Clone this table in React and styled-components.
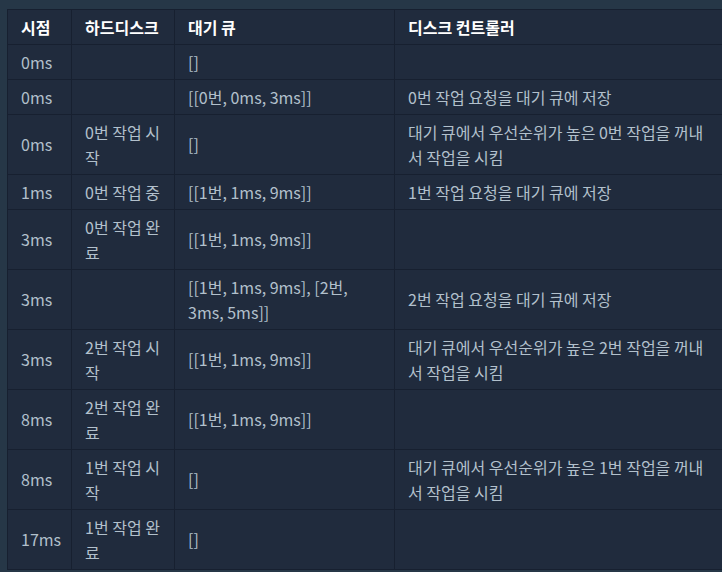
import React from "react";
import styled, { createGlobalStyle } from "styled-components";

const GlobalStyle = createGlobalStyle`
  html, body {
    margin: 0;
    padding: 0;
    background: #263747;
    overflow: hidden;
  }
`;

const Page = styled.div`
  padding: 9px 0 0 7px;
  font-family: "Noto Sans CJK KR", "Noto Sans", sans-serif;
`;

const Table = styled.table`
  border-collapse: collapse;
  table-layout: fixed;
  width: 717px;
  background: #202b3d;
  border: 1px solid #172030;
`;

const Col = styled.col`
  width: ${(p) => p.$w}px;
`;

const Th = styled.th`
  text-align: left;
  font-weight: 700;
  font-size: 16px;
  line-height: 25px;
  color: #ffffff;
  padding: 4.5px 13px;
  border: 1px solid #172030;
`;

const Td = styled.td`
  font-size: 16px;
  line-height: 25px;
  color: #b2c0cc;
  padding: 4.5px 13px;
  border: 1px solid #172030;
  vertical-align: middle;
`;

const columns = [
  { title: "시점", width: 64 },
  { title: "하드디스크", width: 103 },
  { title: "대기 큐", width: 220 },
  { title: "디스크 컨트롤러", width: 330 },
];

const rows = [
  ["0ms", "", "[]", ""],
  ["0ms", "", "[[0번, 0ms, 3ms]]", "0번 작업 요청을 대기 큐에 저장"],
  ["0ms", "0번 작업 시작", "[]", "대기 큐에서 우선순위가 높은 0번 작업을 꺼내서 작업을 시킴"],
  ["1ms", "0번 작업 중", "[[1번, 1ms, 9ms]]", "1번 작업 요청을 대기 큐에 저장"],
  ["3ms", "0번 작업 완료", "[[1번, 1ms, 9ms]]", ""],
  ["3ms", "", "[[1번, 1ms, 9ms], [2번, 3ms, 5ms]]", "2번 작업 요청을 대기 큐에 저장"],
  ["3ms", "2번 작업 시작", "[[1번, 1ms, 9ms]]", "대기 큐에서 우선순위가 높은 2번 작업을 꺼내서 작업을 시킴"],
  ["8ms", "2번 작업 완료", "[[1번, 1ms, 9ms]]", ""],
  ["8ms", "1번 작업 시작", "[]", "대기 큐에서 우선순위가 높은 1번 작업을 꺼내서 작업을 시킴"],
  ["17ms", "1번 작업 완료", "[]", ""],
];

function App() {
  return (
    <Page>
      <GlobalStyle />
      <Table>
        <colgroup>
          {columns.map((c) => (
            <Col key={c.title} $w={c.width} />
          ))}
        </colgroup>
        <thead>
          <tr>
            {columns.map((c) => (
              <Th key={c.title}>{c.title}</Th>
            ))}
          </tr>
        </thead>
        <tbody>
          {rows.map((r, i) => (
            <tr key={i}>
              {r.map((c, j) => (
                <Td key={j}>{c}</Td>
              ))}
            </tr>
          ))}
        </tbody>
      </Table>
    </Page>
  );
}

export default App;
